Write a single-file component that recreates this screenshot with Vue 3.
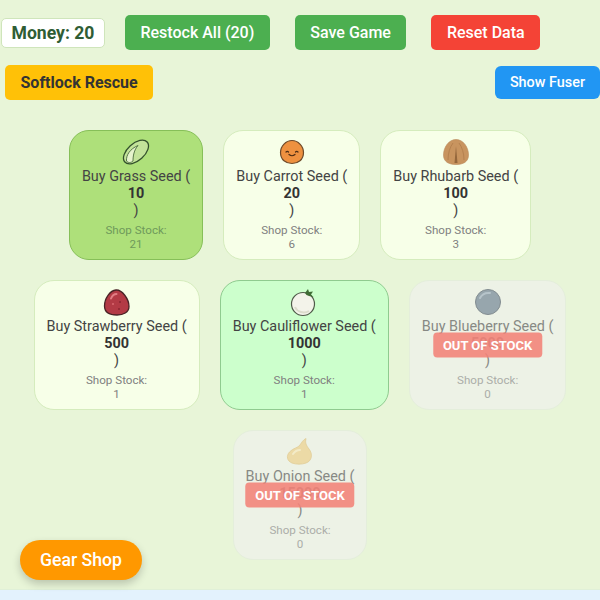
<template>
  <div class="page">
    <main class="game">
      <div class="toolbar">
        <div class="money">Money: {{ money }}</div>
        <button class="btn green">Restock All ({{ money }})</button>
        <button class="btn green">Save Game</button>
        <button class="btn red">Reset Data</button>
      </div>

      <div class="toolbar-second">
        <button class="btn yellow">Softlock Rescue</button>
        <button class="btn blue">Show Fuser</button>
      </div>

      <div class="seed-list">
        <div v-for="seed in seeds" :key="seed.name" class="seed-card" :class="seed.state">
          <div class="card-inner">
            <svg class="seed-icon" viewBox="0 0 30 30">
              <template v-if="seed.icon === 'grass'">
                <ellipse cx="15" cy="15" rx="15" ry="8.500" transform="rotate(-42 15 15)" fill="#c3e39a" stroke="#33502c" stroke-width="1.300" />
                <path d="M5.500 24C5 18 9 12 17 8.500C13 13 12 19 12 24C10 26 7 26 5.500 24Z" fill="#e6f3cd" stroke="#4a6b3c" stroke-width="0.900" />
              </template>
              <template v-else-if="seed.icon === 'carrot'">
                <path d="M15 3.500C21 3.500 26.500 9 26.500 15.500C26.500 23 21 26.500 15 26.500C9 26.500 3.500 23 3.500 15.500C3.500 9 9 3.500 15 3.500Z" fill="#ee9140" stroke="#6e4a2a" stroke-width="1.200" />
                <path d="M9 15C9.800 14.200 10.800 14.200 11.500 15M18.500 15C19.200 14.200 20.200 14.200 21 15" fill="none" stroke="#4f2e14" stroke-width="1.200" stroke-linecap="round" />
                <path d="M12 17.500C13.800 19 16.200 19 18 17.500" fill="none" stroke="#4f2e14" stroke-width="1.200" stroke-linecap="round" />
              </template>
              <template v-else-if="seed.icon === 'rhubarb'">
                <path d="M15 2.500C22 2.500 27.500 10 27.500 18C27.500 25 22 27.500 15 27.500C8 27.500 2.500 25 2.500 18C2.500 10 8 2.500 15 2.500Z" fill="#c8945f" stroke="#b8885a" stroke-width="0.600" />
                <path d="M7 23C7 16 9 10 12 6M23 23C23 16 21 10 18 6" fill="none" stroke="#b5814f" stroke-width="1" />
                <path d="M15 9L16.500 26L13.500 26Z" fill="#94673c" />
              </template>
              <template v-else-if="seed.icon === 'strawberry'">
                <path d="M14 3C20 2.500 27 12 27 19.500C27 25.500 21 28 15 28C8 28 2.500 25.500 2.500 19C2.500 11.500 8 3.500 14 3Z" fill="#b33a45" stroke="#4a2326" stroke-width="1.300" />
                <path d="M9 11.500C10 9 12 7 14.500 7" fill="none" stroke="#e27d84" stroke-width="2" stroke-linecap="round" />
                <circle cx="11" cy="17" r="1" fill="#d9686f" />
                <circle cx="18" cy="15" r="1" fill="#8a2630" />
                <circle cx="17" cy="22" r="1" fill="#8a2630" />
              </template>
              <template v-else-if="seed.icon === 'cauliflower'">
                <circle cx="14" cy="17" r="11.500" fill="#f3f3ea" stroke="#4f5a48" stroke-width="1.200" />
                <path d="M6 20C8 25 15 27 20 24" fill="none" stroke="#dcdccc" stroke-width="2" />
                <path d="M16 6L19 2L20 5L24 4.500L22 7.500L24.500 10L20 9L17.500 8Z" fill="#3f6b35" />
              </template>
              <template v-else-if="seed.icon === 'blueberry'">
                <circle cx="15" cy="15" r="12.500" fill="#5f7488" stroke="#3c4a58" stroke-width="1" />
                <path d="M7 11C9 7 13 5.500 17 6" fill="none" stroke="#93a6b8" stroke-width="2" stroke-linecap="round" />
              </template>
              <template v-else>
                <path d="M21 1.500C20 6 21 8 24 12C28 17 27 24 21 26C17 27.500 11 27.500 7 26C2 24 1 19 4.500 15C8 11 13 11 15 8C17 5 18 3 21 1.500Z" fill="#eccb7c" stroke="#d9b565" stroke-width="0.800" />
                <path d="M8 17C10 14 13 13 15 13" fill="none" stroke="#f8e7b4" stroke-width="2" stroke-linecap="round" />
              </template>
            </svg>
            <div class="title">Buy {{ seed.name }} Seed (<strong>{{ seed.price }}</strong>)</div>
            <div class="stock">Shop Stock:<br />{{ seed.stock }}</div>
          </div>
          <span v-if="seed.stock === 0" class="badge">OUT OF STOCK</span>
        </div>
      </div>

      <button class="gear-shop">Gear Shop</button>
    </main>
    <footer class="bottom-band"></footer>
  </div>
</template>

<script setup>
const money = 20

const seeds = [
  { name: 'Grass', icon: 'grass', price: 10, stock: 21, state: 'selected' },
  { name: 'Carrot', icon: 'carrot', price: 20, stock: 6, state: '' },
  { name: 'Rhubarb', icon: 'rhubarb', price: 100, stock: 3, state: '' },
  { name: 'Strawberry', icon: 'strawberry', price: 500, stock: 1, state: '' },
  { name: 'Cauliflower', icon: 'cauliflower', price: 1000, stock: 1, state: 'highlight' },
  { name: 'Blueberry', icon: 'blueberry', price: 5000, stock: 0, state: 'empty' },
  { name: 'Onion', icon: 'onion', price: 15000, stock: 0, state: 'empty' }
]
</script>

<style scoped>
.page {
  position: relative;
  display: flex;
  flex-direction: column;
  width: 600px;
  height: 600px;
  overflow: hidden;
  font-family: Roboto, "Liberation Sans", sans-serif;
  background: #e8f5d8;
}

.game {
  flex: 1;
  padding-top: 15px;
}

.toolbar {
  display: flex;
  align-items: center;
  gap: 25px;
  padding-left: 1px;
}

.money {
  margin-right: -5px;
  padding: 5px 9.500px;
  font-size: 17.600px;
  font-weight: 700;
  line-height: 18px;
  color: #2f5d34;
  background: #ffffff;
  border: 1px solid #cfe5bb;
  border-radius: 5px;
}

.toolbar-second {
  display: flex;
  justify-content: space-between;
  align-items: center;
  margin-top: 15px;
  padding-left: 5px;
}

.btn {
  height: 35px;
  padding: 0 15.500px;
  font-family: inherit;
  font-size: 16px;
  font-weight: 500;
  color: #ffffff;
  border: none;
  border-radius: 5px;
}

.green {
  background: #4caf50;
}

.red {
  background: #f44336;
}

.yellow {
  font-weight: 700;
  color: #333333;
  background: #ffc107;
}

.blue {
  height: 33px;
  padding: 0 15px;
  font-size: 14.400px;
  background: #2196f3;
  border-radius: 6px;
}

.seed-list {
  display: flex;
  flex-wrap: wrap;
  justify-content: center;
  gap: 20px;
  margin-top: 30px;
}

.seed-card {
  position: relative;
  height: 130px;
  text-align: center;
  color: #444444;
  background: #f7ffe8;
  border: 1px solid #d5ecbd;
  border-radius: 20px;
  box-sizing: border-box;
}

.card-inner {
  padding: 6px 12px 0;
}

.seed-icon {
  display: block;
  width: 30px;
  height: 30px;
  margin: 0 auto 1px;
}

.title {
  font-size: 14.400px;
  line-height: 17px;
}

.title strong {
  display: block;
  color: #333333;
}

.stock {
  margin-top: 5px;
  font-size: 11.600px;
  line-height: 13.500px;
  color: #808080;
}

.selected {
  background: #aee07a;
  border-color: #86bf58;
}

.selected .stock {
  color: #6f9a5a;
}

.highlight {
  background: #ccffcc;
  border-color: #8fcb8f;
}

.empty {
  background: #edf2e6;
  border-color: #e4eedb;
}

.empty .card-inner {
  opacity: 0.6;
}

.badge {
  position: absolute;
  top: 50%;
  left: 50%;
  padding: 5px 10px;
  font-size: 13px;
  font-weight: 700;
  line-height: 15px;
  white-space: nowrap;
  color: #ffffff;
  background: rgba(243, 130, 120, 0.88);
  border-radius: 4px;
  transform: translate(-50%, -50%);
}

.gear-shop {
  position: absolute;
  left: 20px;
  bottom: 20px;
  height: 40px;
  padding: 0 20px;
  font-family: inherit;
  font-size: 17.600px;
  font-weight: 500;
  color: #ffffff;
  background: #ff9800;
  border: none;
  border-radius: 20px;
  box-shadow: 0 4px 8px rgba(0, 0, 0, 0.2);
}

.bottom-band {
  height: 11px;
  background: #e3f2fd;
  border-top: 1px solid #e0f0d8;
  box-sizing: border-box;
}
</style>
